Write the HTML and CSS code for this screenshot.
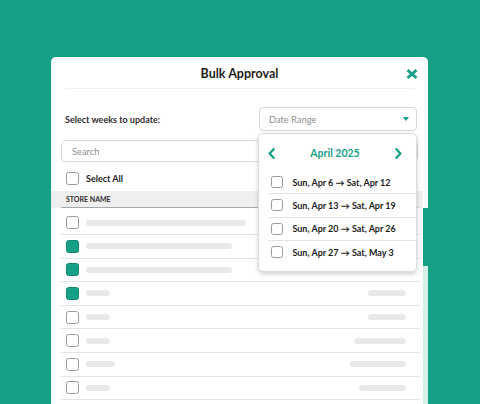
FILE: index.html
```html
<!DOCTYPE html>
<html lang="en">
<head>
<meta charset="utf-8">
<title>Bulk Approval</title>
<link rel="stylesheet" href="styles.css">
</head>
<body>
<div class="modal">
  <header class="modal-head">
    <h1 class="title">Bulk Approval</h1>
    <button class="close" aria-label="Close">
      <svg width="12" height="10" viewBox="0 0 12 10"><path d="M1.5 1 L10.5 9 M10.5 1 L1.5 9" stroke="#16a085" stroke-width="2.8" fill="none"/></svg>
    </button>
  </header>
  <hr class="divider">

  <div class="controls">
    <span class="label">Select weeks to update:</span>
    <div class="date-field">
      <div class="date-input"><span>Date Range</span><span class="caret"></span></div>
      <div class="dropdown">
        <div class="cal-head">
          <svg width="7" height="11" viewBox="0 0 7 11"><polyline points="5.6,1.2 1.6,5.5 5.6,9.8" fill="none" stroke="#16a085" stroke-width="2.3" stroke-linecap="round" stroke-linejoin="round"/></svg>
          <span class="month">April 2025</span>
          <svg width="7" height="11" viewBox="0 0 7 11"><polyline points="1.4,1.2 5.4,5.5 1.4,9.8" fill="none" stroke="#16a085" stroke-width="2.3" stroke-linecap="round" stroke-linejoin="round"/></svg>
        </div>
        <div class="options">
          <div class="option"><span class="cb sm"></span><span>Sun, Apr 6 → Sat, Apr 12</span></div>
          <div class="option"><span class="cb sm"></span><span>Sun, Apr 13 → Sat, Apr 19</span></div>
          <div class="option"><span class="cb sm"></span><span>Sun, Apr 20 → Sat, Apr 26</span></div>
          <div class="option"><span class="cb sm"></span><span>Sun, Apr 27 → Sat, May 3</span></div>
        </div>
      </div>
    </div>
  </div>

  <div class="search">Search</div>

  <label class="select-all"><span class="cb"></span><span>Select All</span></label>

  <div class="table">
    <div class="thead"><div class="thead-inner">STORE NAME</div></div>
    <div class="tbody">
      <div class="rows">
        <div class="row"><span class="cb"></span><span class="bar" style="width:160px"></span></div>
        <div class="row"><span class="cb on"></span><span class="bar" style="width:146px"></span></div>
        <div class="row"><span class="cb on"></span><span class="bar" style="width:146px"></span></div>
        <div class="row"><span class="cb on"></span><span class="bar" style="width:24px"></span><span class="bar right" style="width:38px"></span></div>
        <div class="row"><span class="cb"></span><span class="bar" style="width:24px"></span><span class="bar right" style="width:38px"></span></div>
        <div class="row"><span class="cb"></span><span class="bar" style="width:24px"></span><span class="bar right" style="width:52px"></span></div>
        <div class="row"><span class="cb"></span><span class="bar" style="width:29px"></span><span class="bar right" style="width:56px"></span></div>
        <div class="row"><span class="cb"></span><span class="bar" style="width:24px"></span><span class="bar right" style="width:47px"></span></div>
        <div class="row"><span class="cb"></span><span class="bar" style="width:26px"></span><span class="bar right" style="width:42px"></span></div>
      </div>
      <div class="scrollbar"><div class="thumb"></div></div>
    </div>
  </div>
</div>
</body>
</html>
```
FILE: styles.css
```css
* { box-sizing: border-box; }
html, body { margin: 0; }
body {
  background: #16a085;
  height: 404px;
  overflow: hidden;
  padding: 57px 0 0 51px;
  font-family: Lato, "Open Sans", "DejaVu Sans", sans-serif;
  color: #1c1c1c;
}
.modal {
  width: 377px;
  height: 380px;
  background: #fff;
  border-radius: 5px 5px 0 0;
  padding: 0 10px;
  display: flex;
  flex-direction: column;
}
.modal-head {
  display: grid;
  grid-template-columns: 1fr auto 1fr;
  align-items: center;
  height: 31px;
  padding-top: 2px;
  flex: none;
}
.title {
  grid-column: 2;
  margin: 0;
  font-size: 12.5px;
  font-weight: 700;
  color: #1c1c1c;
}
.close {
  grid-column: 3;
  justify-self: end;
  width: 12px;
  height: 10px;
  padding: 0;
  border: 0;
  background: none;
  display: block;
}
.close svg { display: block; }
.divider {
  margin: 0 3px 0 4px;
  border: 0;
  border-top: 1px solid #efefef;
  height: 0;
  flex: none;
}
.controls {
  display: flex;
  justify-content: space-between;
  align-items: center;
  margin-top: 18px;
  flex: none;
}
.label {
  font-size: 9px;
  font-weight: 700;
  color: #2e2e2e;
  margin-left: 4px;
}
.date-field {
  position: relative;
  width: 158px;
  margin-right: 1px;
}
.date-input {
  height: 24px;
  border: 1px solid #d6d6d6;
  border-radius: 4px;
  display: flex;
  align-items: center;
  justify-content: space-between;
  padding: 0 7px 0 9px;
  font-size: 9.3px;
  color: #8e8e8e;
}
.caret {
  width: 0;
  height: 0;
  border-left: 3.5px solid transparent;
  border-right: 3.5px solid transparent;
  border-top: 4px solid #16a085;
}
.dropdown {
  position: absolute;
  top: calc(100% + 2px);
  left: -1px;
  width: 159px;
  background: #fff;
  border: 1px solid #dcdcdc;
  border-radius: 5px;
  box-shadow: 0 2px 4px rgba(0, 0, 0, 0.18);
  padding-bottom: 8px;
  z-index: 2;
}
.cal-head {
  display: flex;
  justify-content: space-between;
  align-items: center;
  height: 37px;
  padding: 12px 14px 11px 9px;
}
.cal-head svg { display: block; }
.month {
  font-size: 10.5px;
  font-weight: 700;
  color: #16a085;
}
.options { margin-left: 9px; }
.option {
  height: 23.3px;
  display: flex;
  align-items: center;
  gap: 9px;
  padding-left: 3.4px;
  border-bottom: 1px solid #e3e3e3;
  font-size: 9px;
  font-weight: 700;
  color: #1c1c1c;
}
.option:last-child {
  border-bottom: 0;
  height: 22.3px;
}
.cb {
  width: 13px;
  height: 13px;
  border: 1px solid #9a9a9a;
  border-radius: 2.5px;
  background: #fff;
  flex: none;
  display: block;
}
.cb.sm { width: 12px; height: 12px; }
.cb.on { background: #16a085; border-color: #128a72; }
.search {
  margin-top: 9px;
  height: 22px;
  border: 1px solid #d9d9d9;
  border-radius: 5px;
  padding-left: 10px;
  display: flex;
  align-items: center;
  font-size: 9.3px;
  color: #8e8e8e;
  flex: none;
}
.select-all {
  display: flex;
  align-items: center;
  gap: 7px;
  margin-top: 9.7px;
  padding-left: 5px;
  font-size: 9px;
  font-weight: 700;
  flex: none;
}
.table {
  margin: 6.7px -10px 0;
  flex: 1;
  display: flex;
  flex-direction: column;
  min-height: 0;
}
.thead {
  background: #efefef;
  margin-right: 5px;
  padding: 0 5px 0 10px;
  flex: none;
}
.thead-inner {
  height: 17px;
  border-bottom: 1px solid #a8a8a8;
  padding-left: 5px;
  display: flex;
  align-items: center;
  font-size: 7px;
  font-weight: 700;
  color: #2e2e2e;
}
.tbody {
  flex: 1;
  display: flex;
  overflow: hidden;
}
.rows {
  flex: 1;
  padding: 3px 3px 0 10px;
}
.row {
  height: 23.6px;
  border-bottom: 1px solid #e4e4e4;
  display: flex;
  align-items: center;
  padding: 0 14px 0 5px;
}
.bar {
  height: 6px;
  border-radius: 3px;
  background: #e8e8e8;
  margin-left: 7px;
  flex: none;
}
.bar.right { margin-left: auto; }
.scrollbar {
  width: 5px;
  background: #d5eee8;
  flex: none;
}
.thumb {
  height: 58px;
  background: #16a085;
}
```
